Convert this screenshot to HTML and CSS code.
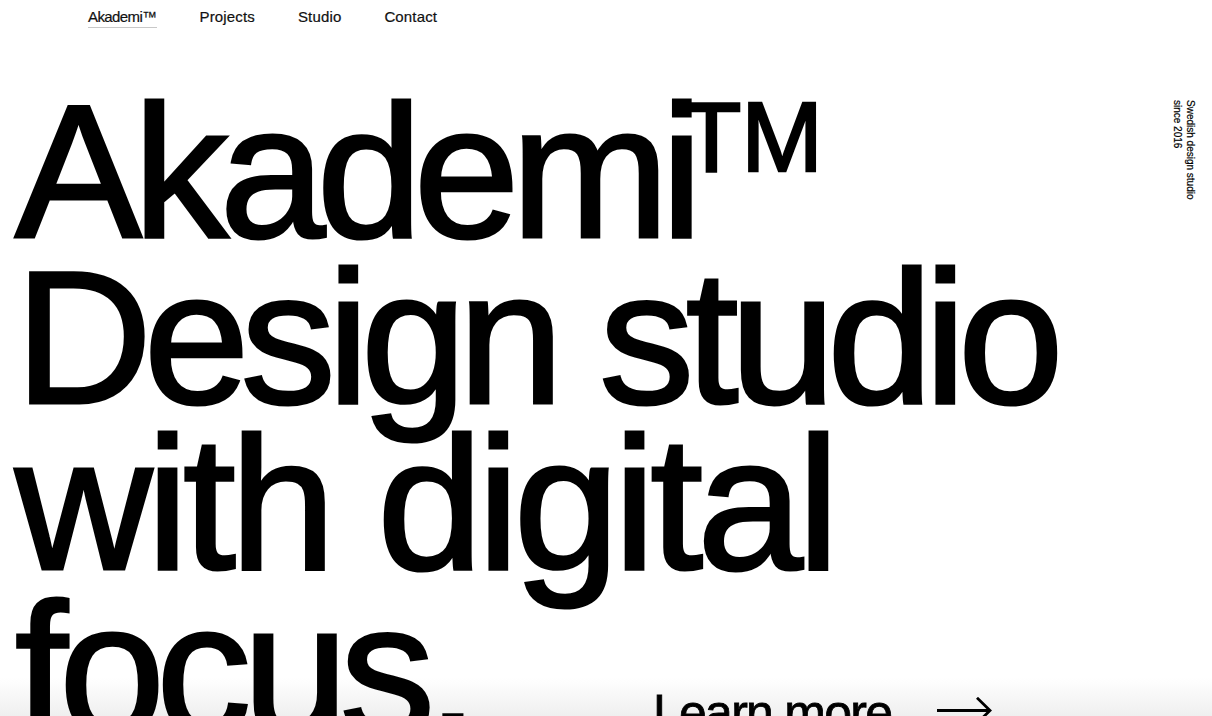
FILE: index.html
```html
<!DOCTYPE html>
<html lang="en">
<head>
<meta charset="utf-8">
<title>Akademi™ — Design studio</title>
<link rel="stylesheet" href="styles.css">
</head>
<body>
<div class="page">
  <header class="site-header">
    <nav class="nav">
      <a class="nav-link nav-brand" href="#">Akademi™</a>
      <a class="nav-link" href="#">Projects</a>
      <a class="nav-link" href="#">Studio</a>
      <a class="nav-link" href="#">Contact</a>
    </nav>
  </header>
  <main class="hero">
    <h1 class="headline">
      <span class="line">Akademi<span class="tm">TM</span></span>
      <span class="line">Design studio</span>
      <span class="line line-wide">with digital</span>
      <span class="line line-last">
        <span>focus.</span>
        <a class="learn" href="#">Learn more
          <svg class="arrow" width="56" height="28" viewBox="0 0 56 28" aria-hidden="true">
            <path d="M0 13.5 H53" fill="none" stroke="#000" stroke-width="2.8"/>
            <path d="M40 0.8 L53 13.5 L40 26.2" fill="none" stroke="#000" stroke-width="2.8"/>
          </svg>
        </a>
      </span>
    </h1>
    <aside class="tagline">Swedish design studio<br>since 2016</aside>
  </main>
</div>
</body>
</html>
```

FILE: styles.css
```css
* { box-sizing: border-box; }

html, body {
  margin: 0;
  padding: 0;
  height: 100%;
  overflow: hidden;
}

body {
  font-family: "Liberation Sans", Arial, Helvetica, sans-serif;
  color: #000;
  background: #fff;
}

.page {
  height: 100vh;
  overflow: hidden;
  background: linear-gradient(180deg, #fff 0, #fff calc(100% - 38px), #efefef 100%);
}

.site-header {
  padding: 8px 0 0 88px;
}

.nav {
  display: flex;
  gap: 43px;
  align-items: flex-start;
}

.nav-link {
  font-size: 15px;
  line-height: 18px;
  letter-spacing: 0.01em;
  color: #111;
  text-decoration: none;
  -webkit-text-stroke: 0.2px #111;
}

.nav-brand {
  letter-spacing: -0.04em;
  padding-bottom: 1px;
  border-bottom: 1px solid #c8c8c8;
}

.hero {
  display: flex;
  justify-content: space-between;
  align-items: flex-start;
  margin-top: 60px;
  padding: 0 15px 0 15px;
}

.headline {
  margin: 0;
  font-weight: 400;
  font-size: 190px;
  line-height: 166px;
  letter-spacing: -0.045em;
  white-space: nowrap;
  -webkit-text-stroke: 3px #000;
}

.line {
  display: block;
}

.line-wide {
  letter-spacing: -0.03em;
}

.tm {
  display: inline-block;
  vertical-align: top;
  font-size: 98px;
  line-height: 1;
  letter-spacing: 0;
  margin-left: -13px;
  -webkit-text-stroke: 2.4px #000;
}

.line-last {
  display: grid;
  grid-template-columns: 638px auto;
  align-items: start;
}

.learn {
  display: flex;
  align-items: flex-start;
  margin-top: 102px;
  font-size: 50px;
  line-height: 50px;
  letter-spacing: -0.035em;
  color: #000;
  text-decoration: none;
  -webkit-text-stroke: 0.8px #000;
}

.arrow {
  margin-left: 46px;
  margin-top: 9px;
  flex: none;
}

.tagline {
  writing-mode: vertical-rl;
  margin-top: 12px;
  font-size: 10px;
  line-height: 13px;
  color: #000;
  -webkit-text-stroke: 0.2px #000;
}
```
